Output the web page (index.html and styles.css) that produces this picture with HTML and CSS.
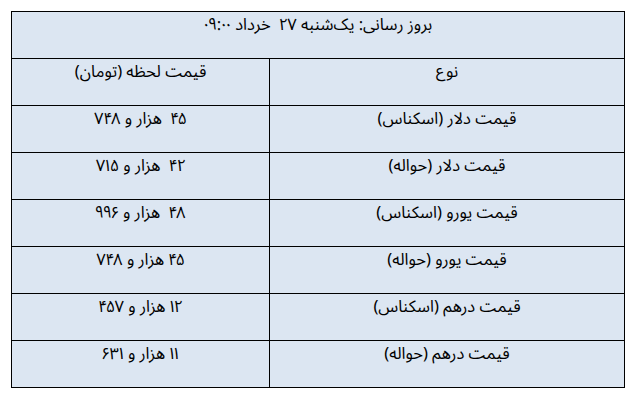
FILE: index.html
```html
<!DOCTYPE html>
<html lang="fa" dir="rtl">
<head>
<meta charset="utf-8">
<title>قیمت ارز</title>
<link rel="stylesheet" href="styles.css">
</head>
<body>
<table class="rates">
  <tr><td class="title" colspan="2">بروز رسانی: یک‌شنبه ۲۷&nbsp; خرداد ۰۹:۰۰</td></tr>
  <tr><td class="kind">نوع</td><td class="price">قیمت لحظه (تومان)</td></tr>
  <tr><td class="kind">قیمت دلار (اسکناس)</td><td class="price">۴۵&nbsp; هزار و ۷۴۸</td></tr>
  <tr><td class="kind">قیمت دلار (حواله)</td><td class="price">۴۲&nbsp; هزار و ۷۱۵</td></tr>
  <tr><td class="kind">قیمت یورو (اسکناس)</td><td class="price">۴۸&nbsp; هزار و ۹۹۶</td></tr>
  <tr><td class="kind">قیمت یورو (حواله)</td><td class="price">۴۵ هزار و ۷۴۸</td></tr>
  <tr><td class="kind">قیمت درهم (اسکناس)</td><td class="price">۱۲ هزار و ۴۵۷</td></tr>
  <tr><td class="kind">قیمت درهم (حواله)</td><td class="price">۱۱ هزار و ۶۳۱</td></tr>
</table>
</body>
</html>
```
FILE: styles.css
```css
html, body {
  margin: 0;
  background: #ffffff;
}
body {
  padding: 11px 10px 0 11px;
  font-family: "Noto Sans Arabic UI", "Noto Sans Arabic", "Noto Naskh Arabic", "DejaVu Sans", sans-serif;
  font-size: 16.5px;
  color: #000;
}
.rates {
  border-collapse: collapse;
  width: 614px;
  background: #dce6f2;
}
.rates td {
  border: 1px solid #000;
  height: 47px;
  padding: 1px 6px 0;
  box-sizing: border-box;
  vertical-align: top;
  text-align: center;
  line-height: 22px;
}
.kind {
  width: 355px;
}
.price {
  width: 258px;
}
```
